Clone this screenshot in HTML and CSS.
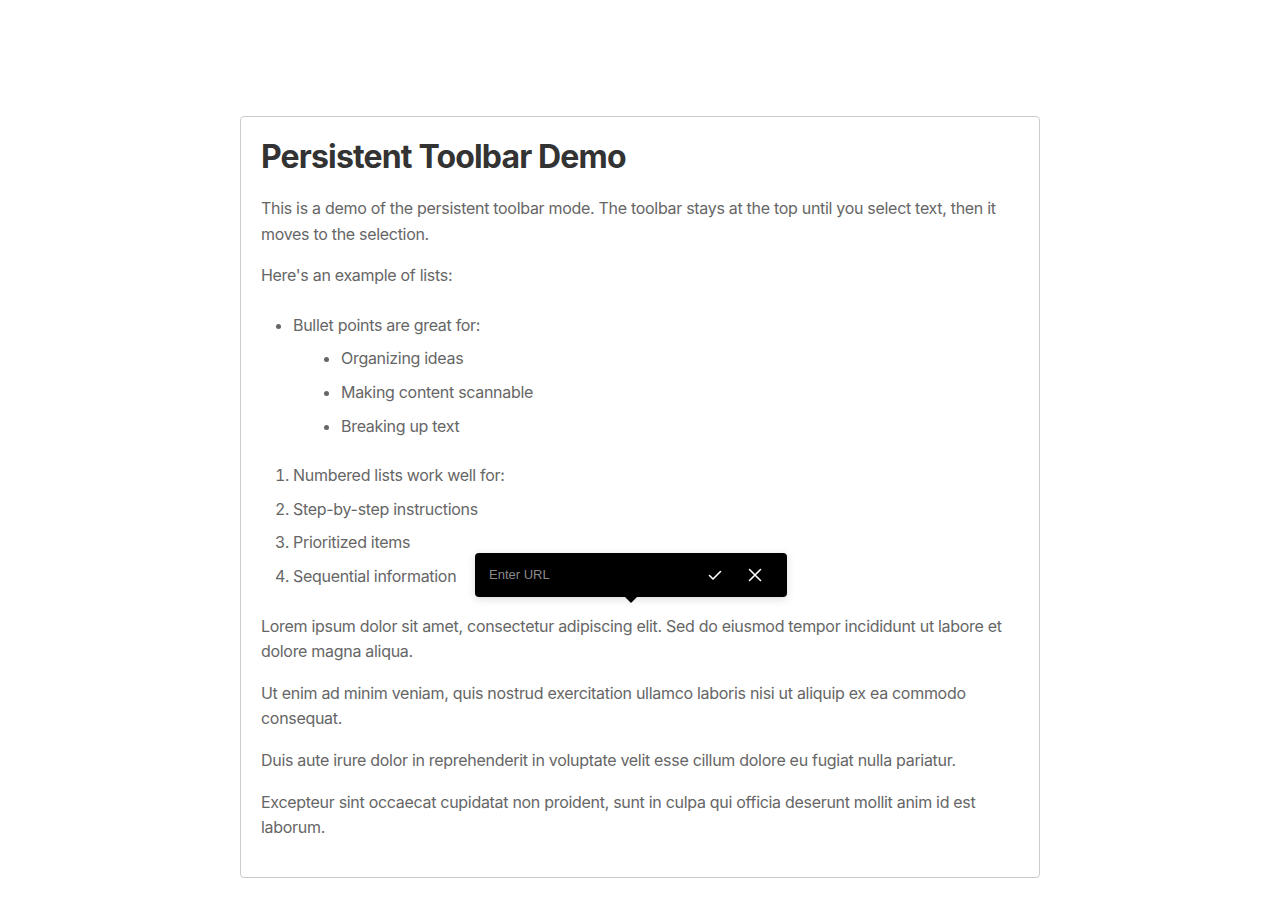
FILE: index.html
```html
<!DOCTYPE html>
<html lang="en">
<head>
<meta charset="utf-8">
<title>Persistent Toolbar Demo</title>
<link rel="stylesheet" href="styles.css">
</head>
<body>
<div class="page">
  <div class="editor">
    <h1>Persistent Toolbar Demo</h1>
    <p>This is a demo of the persistent toolbar mode. The toolbar stays at the top until you select text, then it moves to the selection.</p>
    <p>Here's an example of lists:</p>
    <ul class="list">
      <li>Bullet points are great for:
        <ul class="list nested">
          <li>Organizing ideas</li>
          <li>Making content scannable</li>
          <li>Breaking up text</li>
        </ul>
      </li>
    </ul>
    <ol class="list">
      <li>Numbered lists work well for:</li>
      <li>Step-by-step instructions</li>
      <li>Prioritized items</li>
      <li>Sequential information</li>
    </ol>
    <p>Lorem ipsum dolor sit amet, consectetur adipiscing elit. Sed do eiusmod tempor incididunt ut labore et dolore magna aliqua.</p>
    <p>Ut enim ad minim veniam, quis nostrud exercitation ullamco laboris nisi ut aliquip ex ea commodo consequat.</p>
    <p>Duis aute irure dolor in reprehenderit in voluptate velit esse cillum dolore eu fugiat nulla pariatur.</p>
    <p>Excepteur sint occaecat cupidatat non proident, sunt in culpa qui officia deserunt mollit anim id est laborum.</p>

    <div class="link-toolbar">
      <input class="url-input" type="text" placeholder="Enter URL">
      <button class="tb-btn" aria-label="Apply">
        <svg width="16" height="16" viewBox="0 0 16 16" fill="none" stroke="#fff" stroke-width="1.6" stroke-linecap="round" stroke-linejoin="round"><path d="M2.5 8.5 L6 12 L13.5 4.5"/></svg>
      </button>
      <button class="tb-btn" aria-label="Cancel">
        <svg width="16" height="16" viewBox="0 0 16 16" fill="none" stroke="#fff" stroke-width="1.6" stroke-linecap="round"><path d="M2.5 2.5 L13.5 13.5 M13.5 2.5 L2.5 13.5"/></svg>
      </button>
      <span class="arrow"></span>
    </div>
  </div>
</div>
</body>
</html>
```

FILE: styles.css
```css
html, body {
  margin: 0;
  padding: 0;
  background: #fff;
}

body {
  font-family: Inter, "Noto Sans", sans-serif;
  color: #666;
}

.page {
  padding-top: 116px;
  padding-bottom: 20px;
}

.editor {
  position: relative;
  width: 800px;
  box-sizing: border-box;
  margin: 0 auto;
  padding: 20px;
  border: 1px solid #ccc;
  border-radius: 4px;
}

h1 {
  margin: 0 0 19px;
  font-size: 32px;
  font-weight: 700;
  line-height: 1.25;
  color: #333;
  letter-spacing: -0.85px;
}

p {
  margin: 0 0 16px;
  font-size: 16px;
  line-height: 1.6;
  letter-spacing: -0.3px;
}

.list {
  margin: 24px 0;
  padding-left: 32px;
  font-size: 16px;
  line-height: 1.6;
  letter-spacing: -0.3px;
}

.list li {
  margin-top: 8px;
}

.list li:first-child {
  margin-top: 0;
}

.list.nested {
  margin: 8px 0 0;
  padding-left: 48px;
  list-style: disc;
}

.link-toolbar {
  position: absolute;
  left: 234px;
  top: 436px;
  width: 312px;
  height: 44px;
  box-sizing: border-box;
  display: flex;
  align-items: center;
  padding: 0 12px 0 14px;
  background: #000;
  border-radius: 4px;
  box-shadow: 0 2px 8px rgba(0, 0, 0, 0.15);
}

.url-input {
  flex: 1;
  min-width: 0;
  border: none;
  outline: none;
  background: transparent;
  color: #fff;
  font-family: "Liberation Sans", Arial, sans-serif;
  font-size: 13px;
  padding: 0 0 2px;
}

.url-input::placeholder {
  color: #8a8a8a;
}

.tb-btn {
  width: 40px;
  height: 32px;
  display: flex;
  align-items: center;
  justify-content: center;
  padding: 0;
  border: none;
  background: transparent;
  cursor: pointer;
}

.arrow {
  position: absolute;
  left: 150px;
  bottom: -6px;
  width: 0;
  height: 0;
  border-left: 6px solid transparent;
  border-right: 6px solid transparent;
  border-top: 6px solid #000;
}
```
